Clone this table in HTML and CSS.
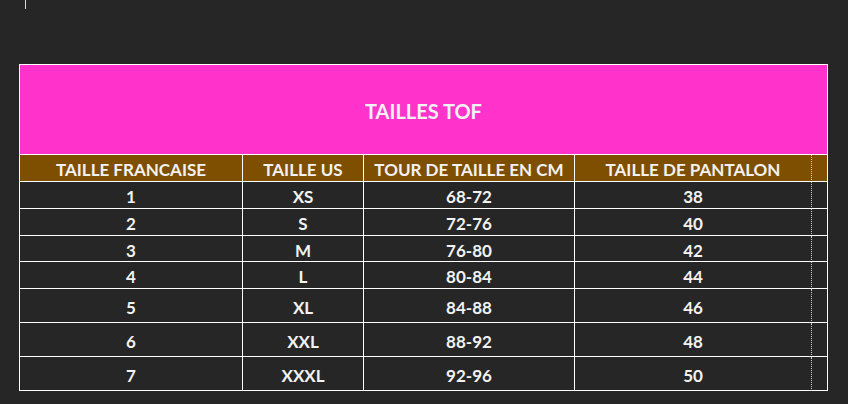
FILE: index.html
```html
<!DOCTYPE html>
<html lang="fr">
<head>
<meta charset="utf-8">
<title>Tailles TOF</title>
<link rel="stylesheet" href="styles.css">
</head>
<body>
<div class="caret"></div>
<div class="sheet">
  <div class="grid">
    <div class="title">TAILLES TOF</div>

    <div class="row head">
      <div class="cell">TAILLE FRANCAISE</div>
      <div class="cell">TAILLE US</div>
      <div class="cell">TOUR DE TAILLE EN CM</div>
      <div class="cell dash">TAILLE DE PANTALON</div>
      <div class="cell"></div>
    </div>

    <div class="row">
      <div class="cell">1</div><div class="cell">XS</div><div class="cell">68-72</div><div class="cell dash">38</div><div class="cell"></div>
    </div>
    <div class="row">
      <div class="cell">2</div><div class="cell">S</div><div class="cell">72-76</div><div class="cell dash">40</div><div class="cell"></div>
    </div>
    <div class="row short">
      <div class="cell">3</div><div class="cell">M</div><div class="cell">76-80</div><div class="cell dash">42</div><div class="cell"></div>
    </div>
    <div class="row">
      <div class="cell">4</div><div class="cell">L</div><div class="cell">80-84</div><div class="cell dash">44</div><div class="cell"></div>
    </div>
    <div class="row tall">
      <div class="cell">5</div><div class="cell">XL</div><div class="cell">84-88</div><div class="cell dash">46</div><div class="cell"></div>
    </div>
    <div class="row tall">
      <div class="cell">6</div><div class="cell">XXL</div><div class="cell">88-92</div><div class="cell dash">48</div><div class="cell"></div>
    </div>
    <div class="row tall">
      <div class="cell">7</div><div class="cell">XXXL</div><div class="cell">92-96</div><div class="cell dash">50</div><div class="cell"></div>
    </div>
  </div>
</div>
</body>
</html>
```

FILE: styles.css
```css
* { box-sizing: border-box; }

html, body {
  margin: 0;
  padding: 0;
  background: #262626;
  width: 848px;
  height: 404px;
  overflow: hidden;
}

body {
  position: relative;
  font-family: Lato, "Open Sans", "Liberation Sans", sans-serif;
  font-weight: 700;
  color: #f2f2f2;
}

.caret {
  position: absolute;
  left: 25px;
  top: 0;
  width: 1px;
  height: 9px;
  background: #d9d9d9;
}

.sheet {
  padding: 64px 0 0 19px;
}

.grid {
  width: 809px;
  border-left: 1px solid #ffffff;
  border-top: 1px solid #ffffff;
}

.title {
  height: 90px;
  background: #ff33cc;
  border-right: 1px solid #ffffff;
  border-bottom: 1px solid #ffffff;
  display: flex;
  align-items: center;
  justify-content: center;
  padding-top: 2px;
  font-size: 20px;
}

.row {
  display: grid;
  grid-template-columns: 223px 121px 211px 237px 16px;
  height: 27px;
}

.row.short { height: 26px; }
.row.tall { height: 34px; }

.cell {
  border-right: 1px solid #ffffff;
  border-bottom: 1px solid #ffffff;
  display: flex;
  align-items: center;
  justify-content: center;
  padding-top: 3px;
  font-size: 17px;
  white-space: nowrap;
}

.cell.dash {
  border-right: 1px dotted #d0d0d0;
}

.head .cell {
  background: #7f4f00;
}
```
